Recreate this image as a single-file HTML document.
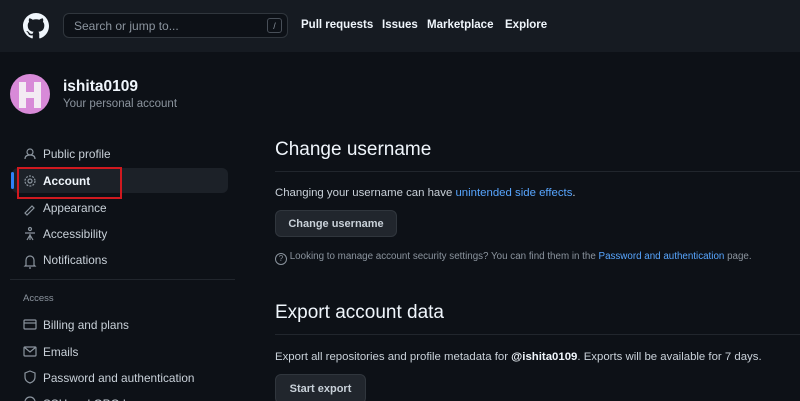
<!DOCTYPE html><html><head><style>
html,body{margin:0;width:800px;height:401px;overflow:hidden}
body{background:#0d1117;font-family:"Liberation Sans",sans-serif;color:#c9d1d9;position:relative}
.a{position:absolute;white-space:nowrap}
.hdr{position:absolute;left:0;top:0;width:800px;height:52px;background:#161b22}
.nav{font-size:11.5px;font-weight:bold;color:#f0f6fc;top:19px}
.si{font-size:11.8px;color:#c9d1d9}
.btn{position:absolute;background:#21262d;border:1px solid #30363d;border-radius:6px;color:#c9d1d9;font-size:11px;font-weight:bold;text-align:center;box-sizing:border-box}
svg{position:absolute}
</style></head><body>
<div class="hdr"></div>
<svg style="left:23px;top:13px" width="26" height="26" viewBox="0 0 16 16"><path fill="#f0f6fc" d="M8 0C3.58 0 0 3.58 0 8c0 3.540 2.290 6.530 5.470 7.590.4.07.55-.17.55-.38 0-.19-.01-.82-.01-1.49-2.01.37-2.53-.49-2.690-.94-.09-.23-.48-.94-.82-1.130-.28-.15-.68-.52-.01-.53.63-.01 1.080.58 1.230.82.72 1.210 1.870.87 2.330.66.07-.52.28-.87.51-1.07-1.78-.2-3.640-.89-3.640-3.950 0-.87.31-1.590.82-2.150-.08-.2-.36-1.020.08-2.120 0 0 .67-.21 2.2.82.64-.18 1.320-.27 2-.27.68 0 1.360.09 2 .27 1.530-1.040 2.2-.82 2.2-.82.44 1.1.16 1.920.08 2.120.51.56.82 1.270.82 2.150 0 3.070-1.870 3.750-3.650 3.950.29.25.54.73.54 1.480 0 1.070-.01 1.930-.01 2.2 0 .21.15.46.55.38A8.013 8.013 0 0016 8c0-4.420-3.580-8-8-8z"/></svg>
<div class="a" style="left:63px;top:13px;width:225px;height:25px;border:1px solid #30363d;border-radius:6px;background:#0d1117;box-sizing:border-box"></div>
<div class="a" style="left:74px;top:19px;font-size:12px;color:#8b949e">Search or jump to...</div>
<div class="a" style="left:267px;top:18px;width:15px;height:15px;border:1px solid #484f58;border-radius:3px;font-size:9px;color:#8b949e;text-align:center;line-height:14px;box-sizing:border-box">/</div>
<div class="a nav" style="left:301px">Pull requests</div>
<div class="a nav" style="left:382px">Issues</div>
<div class="a nav" style="left:427px">Marketplace</div>
<div class="a nav" style="left:505px">Explore</div>

<svg style="left:10px;top:74px" width="40" height="40" viewBox="0 0 40 40">
<circle cx="20" cy="20" r="20" fill="#d88ad8"/>
<path fill="#f3eaf3" d="M9 8h7v10h8V8h7v26h-7V24h-8v10H9z"/>
</svg>
<div class="a" style="left:63px;top:78px;font-size:15.5px;font-weight:bold;color:#f0f6fc">ishita0109</div>
<div class="a" style="left:63px;top:98px;font-size:11.5px;color:#8b949e">Your personal account</div>

<div class="a" style="left:12px;top:168px;width:216px;height:25px;background:#1c2128;border-radius:6px"></div>
<div class="a" style="left:11px;top:172px;width:3px;height:17px;background:#2f81f7;border-radius:2px"></div>
<div class="a si" style="left:43px;top:147px">Public profile</div>
<div class="a si" style="left:43px;top:174px;color:#f0f6fc;font-weight:bold">Account</div>
<div class="a si" style="left:43px;top:201px">Appearance</div>
<div class="a si" style="left:43px;top:227px">Accessibility</div>
<div class="a si" style="left:43px;top:253px">Notifications</div>
<div class="a" style="left:10px;top:279px;width:225px;height:1px;background:#21262d"></div>
<div class="a" style="left:23px;top:293px;font-size:9.5px;color:#8b949e">Access</div>
<div class="a si" style="left:43px;top:318px">Billing and plans</div>
<div class="a si" style="left:43px;top:345px">Emails</div>
<div class="a si" style="left:43px;top:371px">Password and authentication</div>
<div class="a si" style="left:43px;top:397px">SSH and GPG keys</div>
<svg width="240" height="270" style="left:0;top:140px" fill="none" stroke="#8b949e" stroke-width="1.2">
<circle cx="30" cy="12" r="3"/><path d="M25 19c0-3 2-4 5-4s5 1 5 4"/>
<circle cx="30" cy="41" r="2"/><circle cx="30" cy="41" r="5" stroke-dasharray="2 1.2"/>
<path d="M25 73l7-7 2 2-7 7z"/>
<circle cx="30" cy="89" r="1.5"/><path d="M25 93h10M30 94v6M27 100l3-5 3 5"/>
<path d="M26 125v-5a4 4 0 018 0v5l1 1H25zM29 128h2"/>
<rect x="24" y="180" width="12" height="9" rx="1"/><path d="M24 183h12"/>
<rect x="24" y="207" width="12" height="9" rx="1"/><path d="M24 207l6 5 6-5"/>
<path d="M30 231l5 2v4c0 3-2 5-5 6-3-1-5-3-5-6v-4z"/>
<circle cx="30" cy="262" r="5"/>
</svg>
<div class="a" style="left:17px;top:167px;width:105px;height:32px;border:2px solid #d0191f;box-sizing:border-box"></div>

<div class="a" style="left:275px;top:139px;font-size:19px;color:#f0f6fc">Change username</div>
<div class="a" style="left:275px;top:171px;width:525px;height:1px;background:#21262d"></div>
<div class="a" style="left:275px;top:187px;font-size:11.4px">Changing your username can have <span style="color:#58a6ff">unintended side effects</span>.</div>
<div class="btn" style="left:275px;top:210px;width:122px;height:27px;line-height:27px">Change username</div>
<div class="a" style="left:275px;top:251px;font-size:9.8px;color:#8b949e"><span style="display:inline-block;width:10px;height:10px;border:1px solid #8b949e;border-radius:50%;font-size:8px;text-align:center;line-height:10px;vertical-align:-2px">?</span> Looking to manage account security settings? You can find them in the <span style="color:#58a6ff">Password and authentication</span> page.</div>
<div class="a" style="left:275px;top:302px;font-size:19px;color:#f0f6fc">Export account data</div>
<div class="a" style="left:275px;top:334px;width:525px;height:1px;background:#21262d"></div>
<div class="a" style="left:275px;top:351px;font-size:11.4px">Export all repositories and profile metadata for <b style="color:#f0f6fc">@ishita0109</b>. Exports will be available for 7 days.</div>
<div class="btn" style="left:275px;top:374px;width:91px;height:30px;line-height:29px">Start export</div>
</body></html>
